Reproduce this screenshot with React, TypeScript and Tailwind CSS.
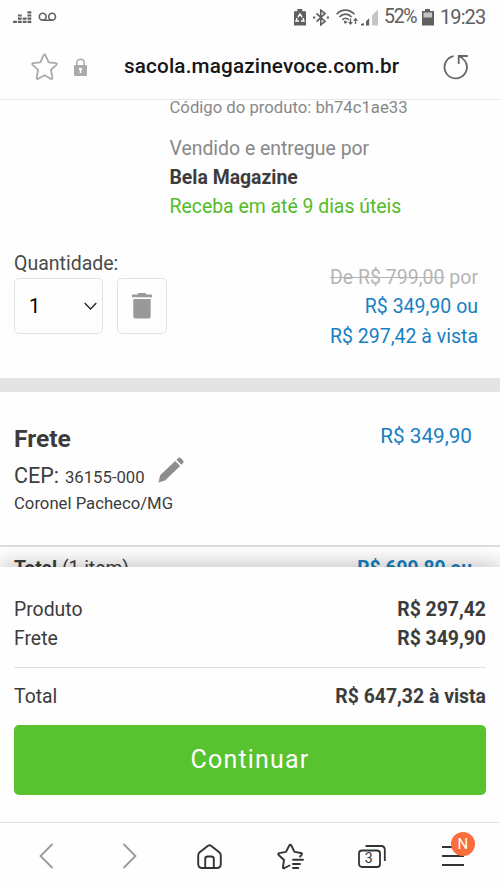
import type { ReactNode } from 'react'

type RowProps = { label: string; value: string }

function SummaryRow({ label, value }: RowProps) {
  return (
    <div className="flex h-[29px] items-center justify-between text-[19.4px] text-[#3c3c3c]">
      <span>{label}</span>
      <span className="font-bold">{value}</span>
    </div>
  )
}

function NavButton({ label, children }: { label: string; children: ReactNode }) {
  return (
    <button aria-label={label} className="relative flex h-[44px] w-[44px] items-center justify-center">
      {children}
    </button>
  )
}

function StatusBar() {
  return (
    <div className="flex h-[34px] shrink-0 items-center pl-[13px] pr-[14px] text-[#606060]">
      <svg className="h-3 w-[19px]" viewBox="0 0 19 12" fill="none" stroke="currentColor" strokeWidth="3.8">
        <path d="M2 12v-2.2M6.8 12V2.8M11.6 12V5.8M16.4 12V0" strokeDasharray="2.2 1" />
      </svg>
      <svg className="ml-[6px] h-[10px] w-[19px]" viewBox="0 0 19 10" fill="none" stroke="currentColor" strokeWidth="1.6">
        <circle cx="4.7" cy="4.7" r="3.4" />
        <circle cx="14.1" cy="4.7" r="3.4" />
        <path d="M4.7 8.2h9.4" />
      </svg>

      <div className="ml-auto flex items-center">
        <svg className="h-[17px] w-3" viewBox="0 0 12 17">
          <path fill="currentColor" d="M0 2.2h3.3V0h5v2.2H12V16.5H0z" />
          <path d="m4 8 2-3 2 3M9 9l1 3H7M5 12H2l1.2-3" fill="none" stroke="#fff" strokeWidth="1.4" />
        </svg>
        <svg className="ml-[7px] h-[17px] w-4" viewBox="0 0 16 17" fill="none" stroke="currentColor" strokeWidth="1.7">
          <path d="m3.5 4.3 8.5 8.2-4.200 3.300V1.200L12 4.500l-8.500 8.200" />
          <path d="M0 8.5h2.300M13.700 8.500H16" strokeWidth="2" />
        </svg>
        <svg className="ml-[7px] h-[17px] w-[22px]" viewBox="0 0 22 17" fill="none" stroke="currentColor" strokeWidth="1.6">
          <path d="M.6 5.200c5-5.400 12.600-5.400 17.800 0M3.300 8c3.700-3.800 8.700-3.800 12.400 0M6.200 10.800c2-1.900 4.600-1.900 6.600 0" />
          <circle cx="9.4" cy="13" r="1.5" fill="currentColor" stroke="none" />
          <path d="M14.5 9.500v5M19.500 15V10.500" strokeWidth="1.3" />
          <path d="M12 13h5l-2.500 3zM17 11.700h5l-2.500-3z" fill="currentColor" stroke="none" />
        </svg>
        <svg className="ml-[3px] h-[17px] w-[17px]" viewBox="0 0 17 17">
          <path fill="#c4c4c4" d="M11 6.500 17 .5v16h-6z" />
          <path fill="currentColor" d="M0 16.500V15l3-1v2.500zM5 12.200l3.200-3v7.300H5z" />
        </svg>
        <span className="ml-[6px] w-[33px] whitespace-nowrap text-[19.5px] leading-6 tracking-[-1.3px]">52%</span>
        <svg className="ml-[5px] h-[17px] w-3" viewBox="0 0 12 17">
          <path fill="currentColor" d="M0 2h3V0h5v2h4v14.500H0z" />
          <path fill="#c4c4c4" d="M1.500 3.500h8.500v5H1.500z" />
        </svg>
        <span className="ml-[6px] w-[46px] whitespace-nowrap text-[20px] leading-6 tracking-[-0.9px]">19:23</span>
      </div>
    </div>
  )
}

function AddressBar() {
  return (
    <header className="flex h-[66px] shrink-0 items-center border-b border-[#e8e8e8] pl-[31px] pr-[31px]">
      <svg className="h-7 w-[27px]" viewBox="0 0 27 28" fill="none" stroke="#aaa" strokeWidth="1.8" strokeLinejoin="round">
        <path d="M12.500 2.300q1-1.700 2 0l3.200 7 7.200.9q1.700.4.500 1.600l-5.500 5 1.500 7.800q0 1.900-1.700 1.200l-6.200-3.600-6.200 3.600q-1.700.7-1.700-1.200l1.500-7.800-5.500-5Q.4 10.600 2.100 10.200l7.200-.9z" />
      </svg>
      <svg className="ml-4 h-[18px] w-[13px]" viewBox="0 0 13 18">
        <path d="M2.800 8V4.800C2.800 0 10.200 0 10.200 4.800V8" fill="none" stroke="#aaa" strokeWidth="1.5" />
        <rect y="7" width="13" height="11" rx="1.3" fill="#aaa" />
        <path d="M5 10h3v2H7.300v3H5.700v-3H5z" fill="#fff" />
      </svg>
      <span className="ml-[37px] whitespace-nowrap text-[20.7px] font-medium tracking-[0.15px] text-[#171717]">
        sacola.magazinevoce.com.br
      </span>
      <svg className="ml-auto h-[26px] w-[26px]" viewBox="0 0 26 26" fill="none" stroke="#666" strokeWidth="1.8">
        <path d="M10.500 2.200A11.200 11.200 0 1 0 22.200 7.200" />
        <path d="M24.800 2H15.700v8M15.900 2.200q3.800 1.500 6.300 5" />
      </svg>
    </header>
  )
}

function CartItem() {
  return (
    <section className="h-[278px] shrink-0">
      <div className="pl-[169.5px]">
        <p className="h-[34px] text-[16.7px] leading-[15px] text-[#888]">Código do produto: bh74c1ae33</p>
        <p className="text-[19.4px] leading-[29px] text-[#888]">Vendido e entregue por</p>
        <p className="text-[19.4px] font-bold leading-[29px] text-[#3c3c3c]">Bela Magazine</p>
        <p className="text-[19.4px] leading-[29px] text-[#53bb2b]">Receba em até 9 dias úteis</p>
      </div>
      <div className="mt-7 flex justify-between pl-[14px] pr-[22px]">
        <div>
          <p className="text-[19.5px] leading-[29px] text-[#4a4a4a]">Quantidade:</p>
          <div className="flex gap-[14px]">
            <button className="flex h-[56px] w-[89px] items-center justify-between rounded-[5px] border border-[#e2e2e2] pl-[14px] pr-[5px] text-[20px] text-black">
              1
              <svg className="h-2 w-[13px]" viewBox="0 0 13 8" fill="none" stroke="#222" strokeWidth="1.3">
                <path d="m.7 1 5.800 6 5.800-6" />
              </svg>
            </button>
            <button aria-label="Remover" className="flex h-[56px] w-[50px] items-center justify-center rounded-[5px] border border-[#e2e2e2]">
              <svg className="h-[26px] w-5" viewBox="0 0 20 26" fill="#999">
                <path d="M0 2.300Q0 1.500 1 1.500h4.500Q6 0 7 0h6q1 0 1.500 1.500H19q1 0 1 .8v1.900H0zM1.300 6h17.400v17.500q0 2-2 2H3.300q-2 0-2-2z" />
              </svg>
            </button>
          </div>
        </div>
        <div className="pt-[14px] text-right text-[19.5px] leading-[29.3px] text-[#1680c2]">
          <p className="text-[#b5b5b5]"><span className="line-through">De R$ 799,00</span> por</p>
          <p>R$ 349,90 ou</p>
          <p>R$ 297,42 à vista</p>
        </div>
      </div>
    </section>
  )
}

function Shipping() {
  return (
    <section className="flex h-[153px] shrink-0 justify-between pl-[14px] pr-[28px] text-[#3c3c3c]">
      <div>
        <h2 className="mt-[31px] text-[24.6px] font-bold leading-8">Frete</h2>
        <div className="flex h-[37px] items-baseline pt-[2px]">
          <span className="text-[21.5px] leading-[34px]">CEP:</span>
          <span className="ml-[6px] text-[16.7px]">36155-000</span>
          <svg className="ml-[13px] h-[26px] w-[26px]" viewBox="0 0 26 26" fill="#8d8d8d">
            <path d="m.5 25.500 1.600-7.300L17.200 4l5 5L7 23.500zM18.500 2.900l1.700-1.800q1.200-1.200 3 .3l1.500 1.500q1.500 1.700.3 3l-1.500 1.900z" />
          </svg>
        </div>
        <p className="text-[16.7px] leading-6">Coronel Pacheco/MG</p>
      </div>
      <p className="pt-[30px] text-[20.7px] leading-[29px] text-[#1680c2]">R$ 349,90</p>
    </section>
  )
}

function CheckoutSheet() {
  return (
    <section className="relative z-10 h-[255px] shrink-0 bg-[#fefefe] px-[14px] pt-7 shadow-[0_0_22px_rgba(0,0,0,0.3)]">
      <SummaryRow label="Produto" value="R$ 297,42" />
      <SummaryRow label="Frete" value="R$ 349,90" />
      <div className="mb-[14px] mt-[14px] h-px bg-[#dedede]" />
      <SummaryRow label="Total" value="R$ 647,32 à vista" />
      <button className="mt-[14px] h-[70px] w-full rounded-[5px] bg-[#59c22f] text-[25px] tracking-[1.2px] text-white">
        Continuar
      </button>
    </section>
  )
}

function BottomNav() {
  return (
    <nav className="relative z-20 flex h-[67px] shrink-0 items-center justify-between border-t border-[#e4e4e4] bg-[#fefefe] px-[25px]">
      <NavButton label="Voltar">
        <svg className="mr-[2px] h-[26px] w-[15px]" viewBox="0 0 15 26" fill="none" stroke="#999" strokeWidth="1.8">
          <path d="M13.500 1 1.500 13l12 12" />
        </svg>
      </NavButton>
      <NavButton label="Avançar">
        <svg className="ml-[3px] h-[26px] w-[15px]" viewBox="0 0 15 26" fill="none" stroke="#999" strokeWidth="1.8">
          <path d="m1.500 1 12 12-12 12" />
        </svg>
      </NavButton>
      <NavButton label="Início">
        <svg className="h-[25px] w-[25px]" viewBox="0 0 25 25" fill="none" stroke="#333" strokeWidth="1.9" strokeLinejoin="round">
          <path d="M1.200 11.500q0-2 1.500-3.200L11 1.700q1.500-1 3 0l8.300 6.600q1.500 1.200 1.500 3.200V20q0 4-4 4H5.200q-4 0-4-4z" />
          <path d="M8.200 24V15q0-2.500 2.500-2.500h3.600q2.500 0 2.500 2.500v9" />
        </svg>
      </NavButton>
      <NavButton label="Favoritos">
        <svg className="h-[27px] w-[27px]" viewBox="0 0 27 27" fill="none" stroke="#333" strokeWidth="1.9" strokeLinejoin="round" strokeLinecap="round">
          <path d="m12.500 22.500-5 2.500q-1.700.7-1.500-1l1-7-5.300-5q-1.200-1.500.5-1.900l6.800-1.200 3.300-6.400q1-1.700 2 0l3.200 6.400 6.500 1.100q1.700.3.600 1.800l-1.500 1.700" />
          <path d="M16 16.700h10M16 21h7M16 25h5.200" />
        </svg>
      </NavButton>
      <NavButton label="Abas">
        <svg className="h-[25px] w-[28px]" viewBox="0 0 28 25" fill="none" stroke="#333" strokeWidth="1.8">
          <rect x="1" y="6.5" width="21" height="16.5" rx="3" />
          <path d="M7.500 2H23q3.800 0 3.800 3.800V17" />
        </svg>
        <span className="absolute left-[15px] top-[15px] text-[14px] leading-[18px] text-[#333]">3</span>
      </NavButton>
      <NavButton label="Menu">
        <svg className="h-5 w-[22px]" viewBox="0 0 22 20" stroke="#333" strokeWidth="1.9">
          <path d="M0 1h22M0 10h22M0 19h22" />
        </svg>
        <span className="absolute left-[20px] top-[-2px] flex h-6 w-6 items-center justify-center rounded-full bg-[#fb6d3a] text-[15px] text-white">
          N
        </span>
      </NavButton>
    </nav>
  )
}

export default function App() {
  return (
    <div className="flex h-[889px] w-[500px] flex-col overflow-hidden bg-[#fefefe] font-['Roboto',sans-serif]">
      <StatusBar />
      <AddressBar />
      <main className="flex h-[467px] shrink-0 flex-col">
        <CartItem />
        <div className="h-[14px] shrink-0 bg-[#e4e4e4]" />
        <Shipping />
        <div className="h-[2px] shrink-0 bg-[#dedede]" />
        {/* slides under the checkout sheet */}
        <div className="flex shrink-0 justify-between pl-[14px] pr-[28px] pt-[7px] text-[19.3px] leading-[29px] text-[#3c3c3c]">
          <p><b>Total</b> (1 item)</p>
          <p className="font-bold text-[#1680c2]">R$ 699,80 ou</p>
        </div>
      </main>
      <CheckoutSheet />
      <BottomNav />
    </div>
  )
}
